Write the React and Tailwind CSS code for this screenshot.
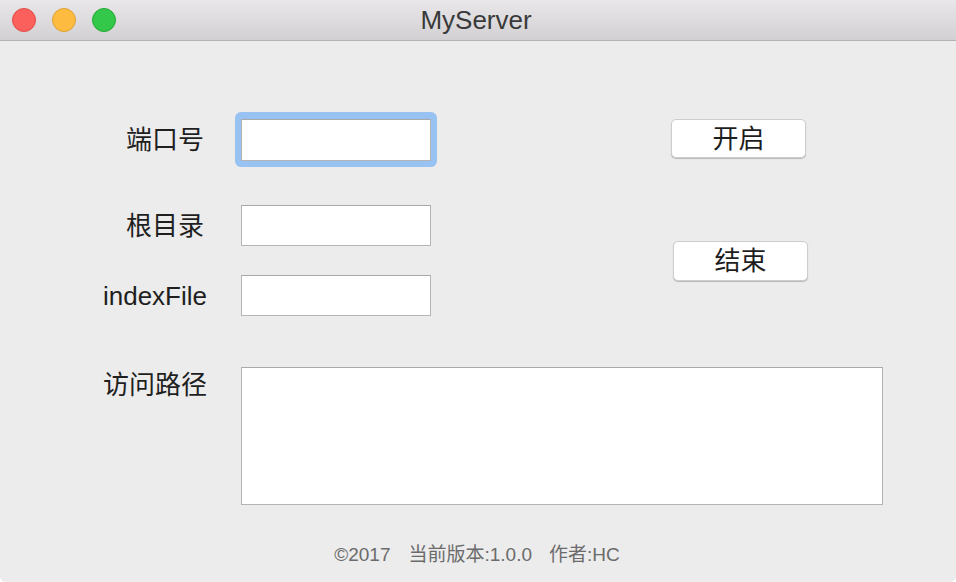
import React from "react";

const font = { fontFamily: '"Liberation Sans", "Noto Sans CJK SC", sans-serif' };

function Field({ focused }) {
  const input = (
    <div className="h-full w-[190px] bg-white border border-[#b4b4b4] border-t-[#a9a9a9]" />
  );
  if (focused) {
    return (
      <div className="-my-[7px] -mx-[6px] rounded-[6px] bg-[#97c2f1] px-[6px] pt-[7px] pb-[6px] h-[55px]">
        {input}
      </div>
    );
  }
  return input;
}

function Button({ children, className = "" }) {
  return (
    <button
      className={
        "w-[135px] h-[39px] rounded-[5px] bg-white border border-[#cdcdcd] shadow-[0_1px_1px_rgba(0,0,0,0.22)] text-[26px] leading-none text-[#1e1e1e] flex items-center justify-center " +
        className
      }
    >
      {children}
    </button>
  );
}

export default function App() {
  return (
    <div className="w-[956px] h-[582px] bg-white" style={font}>
      <div className="w-full h-full rounded-b-[6px] overflow-hidden bg-[#ececec] flex flex-col">
        <div className="h-[41px] shrink-0 bg-gradient-to-b from-[#e9e7e9] to-[#d2d0d2] border-b border-[#b3b1b3] flex items-center relative">
          <div className="flex items-center gap-[16px] pl-[12px]">
            <span className="w-[24px] h-[24px] rounded-full bg-[#fc605c] border border-[#df4b46]" />
            <span className="w-[24px] h-[24px] rounded-full bg-[#fdbc40] border border-[#dea134]" />
            <span className="w-[24px] h-[24px] rounded-full bg-[#34c84a] border border-[#25a834]" />
          </div>
          <div className="absolute inset-0 flex items-center justify-center text-[26px] text-[#3a3a3a] leading-none pb-[1px] pr-[4px]">
            MyServer
          </div>
        </div>

        <div className="pt-[78px] flex flex-col">
          <div className="flex">
            <div className="w-[431px] flex flex-col">
              <div className="flex items-center h-[42px]">
                <div className="w-[207px] pr-[3px] text-right text-[26px] leading-[30px] text-[#1f1f1f]">端口号</div>
                <div className="ml-[34px] h-full">
                  <Field focused />
                </div>
              </div>
              <div className="flex items-center h-[41px] mt-[44px]">
                <div className="w-[207px] pr-[3px] text-right text-[26px] leading-[30px] text-[#1f1f1f]">根目录</div>
                <div className="ml-[34px] h-full">
                  <Field />
                </div>
              </div>
              <div className="flex items-center h-[41px] mt-[29px]">
                <div className="w-[207px] text-right text-[26px] leading-[30px] text-[#1f1f1f]">indexFile</div>
                <div className="ml-[34px] h-full">
                  <Field />
                </div>
              </div>
            </div>
            <div className="flex flex-col pl-[240px]">
              <Button>开启</Button>
              <Button className="mt-[83px] ml-[2px] h-[40px]">结束</Button>
            </div>
          </div>

          <div className="flex items-start mt-[51px]">
            <div className="w-[207px] text-right text-[26px] leading-[30px] text-[#1f1f1f] pt-[3px]">访问路径</div>
            <div className="ml-[34px] w-[642px] h-[138px] bg-white border border-[#b4b4b4] border-t-[#a9a9a9]" />
          </div>

          <div className="mt-[38px] flex justify-center text-[19px] leading-[24px] text-[#6b6b6b] pr-[2px]">
            <span>©2017</span>
            <span className="ml-[18px]">当前版本:1.0.0</span>
            <span className="ml-[17px]">作者:HC</span>
          </div>
        </div>
      </div>
    </div>
  );
}
